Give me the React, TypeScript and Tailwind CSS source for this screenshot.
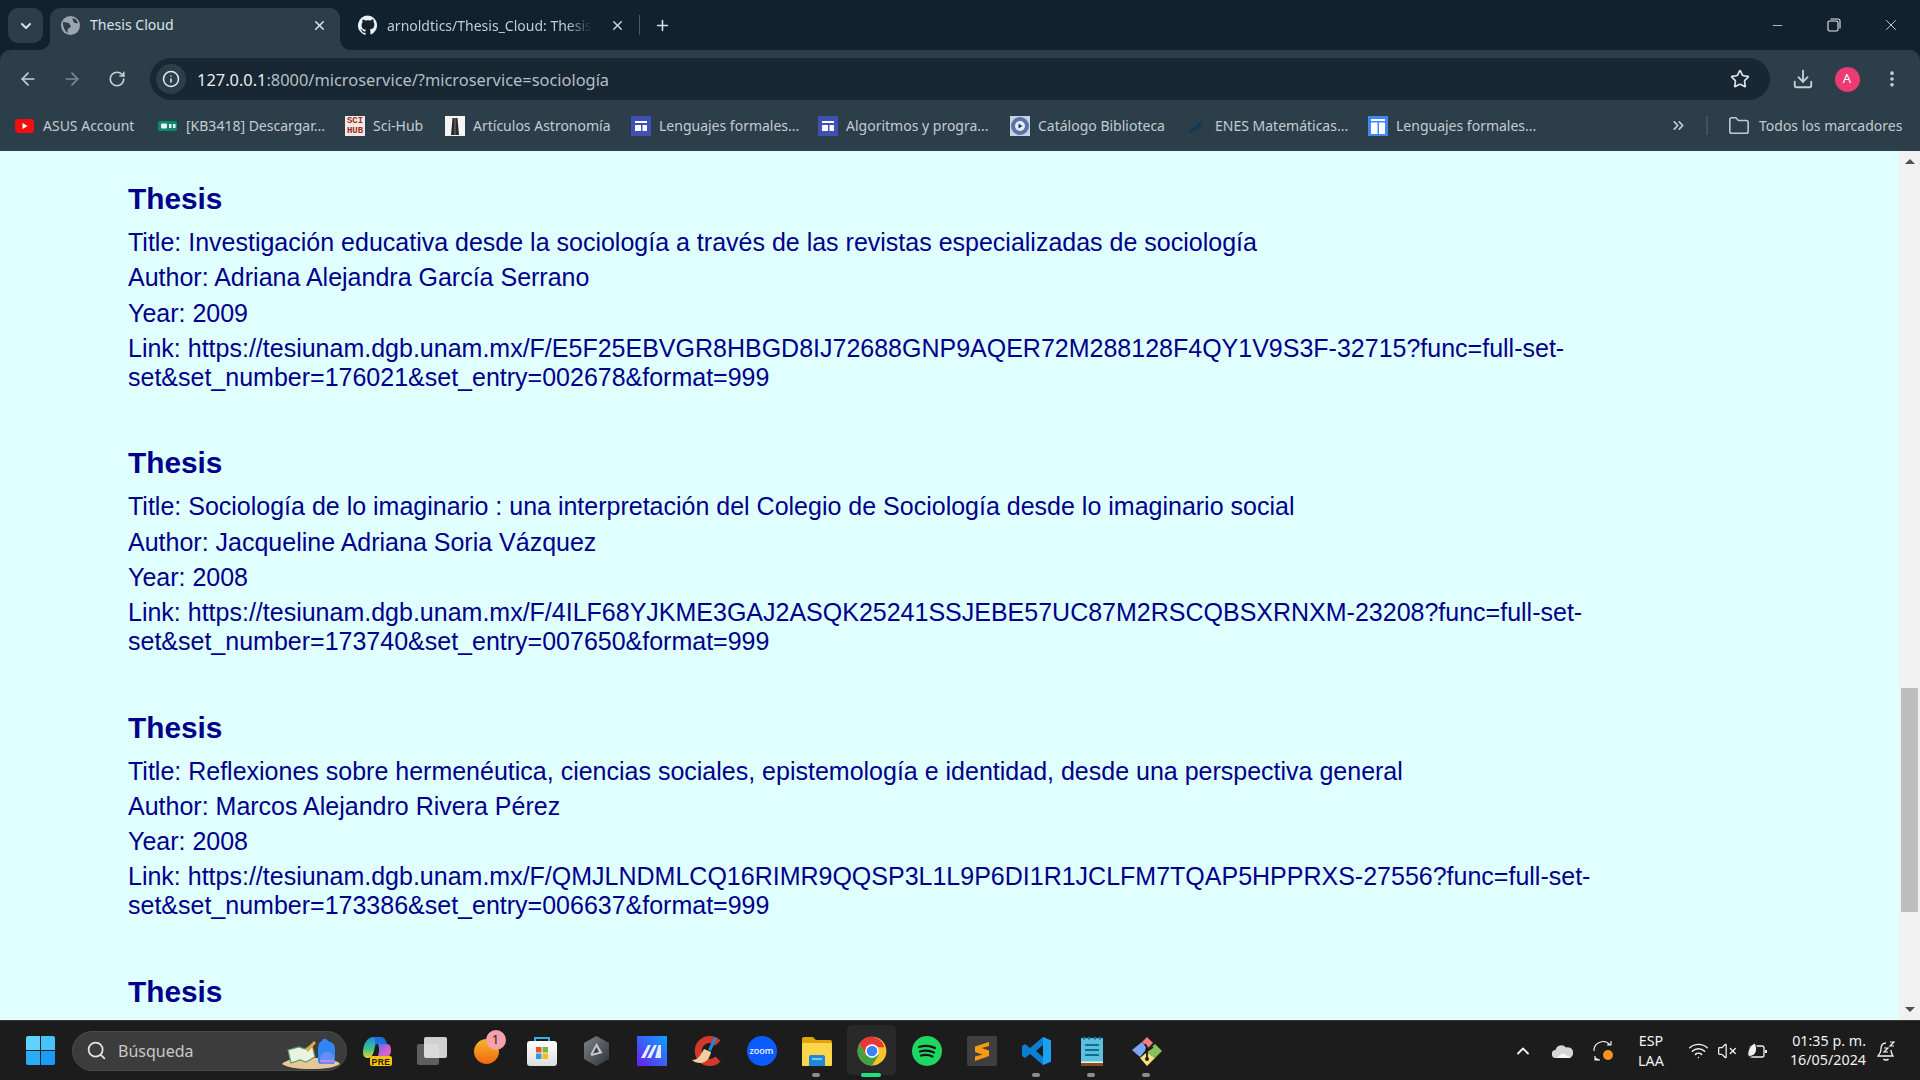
import { ArrowLeft, ArrowRight, RotateCw, Info, Star, Download, EllipsisVertical, ChevronsRight, Folder, X, Plus, ChevronDown, Minus, Search, ChevronUp, Wifi, VolumeX } from 'lucide-react'

const THESES = [
  {
    title: 'Investigación educativa desde la sociología a través de las revistas especializadas de sociología',
    author: 'Adriana Alejandra García Serrano',
    year: '2009',
    link: 'https://tesiunam.dgb.unam.mx/F/E5F25EBVGR8HBGD8IJ72688GNP9AQER72M288128F4QY1V9S3F-32715?func=full-set-set&set_number=176021&set_entry=002678&format=999',
  },
  {
    title: 'Sociología de lo imaginario : una interpretación del Colegio de Sociología desde lo imaginario social',
    author: 'Jacqueline Adriana Soria Vázquez',
    year: '2008',
    link: 'https://tesiunam.dgb.unam.mx/F/4ILF68YJKME3GAJ2ASQK25241SSJEBE57UC87M2RSCQBSXRNXM-23208?func=full-set-set&set_number=173740&set_entry=007650&format=999',
  },
  {
    title: 'Reflexiones sobre hermenéutica, ciencias sociales, epistemología e identidad, desde una perspectiva general',
    author: 'Marcos Alejandro Rivera Pérez',
    year: '2008',
    link: 'https://tesiunam.dgb.unam.mx/F/QMJLNDMLCQ16RIMR9QQSP3L1L9P6DI1R1JCLFM7TQAP5HPPRXS-27556?func=full-set-set&set_number=173386&set_entry=006637&format=999',
  },
]

function FormsIcon({ light }: { light?: boolean }) {
  return (
    <svg width="20" height="20" viewBox="0 0 20 20">
      <rect width="20" height="20" fill={light ? '#4285f4' : '#3f51b5'} />
      {light ? (
        <>
          <rect x="3" y="3" width="14" height="15" fill="#fff" />
          <rect x="3" y="5" width="14" height="1.5" fill="#4285f4" />
          <rect x="9.5" y="6" width="1.5" height="12" fill="#4285f4" />
        </>
      ) : (
        <>
          <rect x="4" y="5" width="12" height="2" fill="#fff" />
          <rect x="4" y="9" width="12" height="6" fill="#fff" />
          <rect x="10" y="9" width="1.5" height="6" fill="#3f51b5" />
        </>
      )}
    </svg>
  )
}

const BOOKMARKS = [
  {
    label: 'ASUS Account',
    w: 'w-[95px]',
    icon: (
      <svg width="20" height="20" viewBox="0 0 20 20">
        <rect x="0" y="3" width="19" height="14" rx="4" fill="#f40f0f" />
        <path d="M7.5 7l5 3-5 3z" fill="#fff" />
      </svg>
    ),
  },
  {
    label: '[KB3418] Descargar...',
    w: 'w-[139px]',
    icon: (
      <svg width="20" height="20" viewBox="0 0 20 20">
        <rect x="0" y="5" width="19" height="10" rx="2" fill="#0a8a6a" />
        <rect x="3" y="7.5" width="6" height="5" rx="1" fill="#e4f3ee" />
        <rect x="11" y="8" width="2.5" height="4" fill="#e4f3ee" />
        <rect x="15" y="8" width="2.5" height="4" fill="#e4f3ee" />
      </svg>
    ),
  },
  {
    label: 'Sci-Hub',
    w: 'w-[52px]',
    icon: (
      <div className="flex h-[20px] w-[20px] flex-col items-center justify-center bg-[#f3e9e4] font-['Liberation_Mono',monospace] text-[9px] font-bold leading-[10px] text-[#9c2b22]">
        <span>SCI</span>
        <span>HUB</span>
      </div>
    ),
  },
  {
    label: 'Artículos Astronomía',
    w: 'w-[138px]',
    icon: (
      <svg width="20" height="20" viewBox="0 0 20 20">
        <rect width="20" height="20" fill="#f4f4f4" />
        <path d="M6 19L7.5 2h5L14 19z" fill="#2b2b2b" />
        <path d="M10 2v17" stroke="#777" strokeWidth="1" />
      </svg>
    ),
  },
  { label: 'Lenguajes formales...', w: 'w-[139px]', icon: <FormsIcon /> },
  { label: 'Algoritmos y progra...', w: 'w-[144px]', icon: <FormsIcon /> },
  {
    label: 'Catálogo Biblioteca',
    w: 'w-[129px]',
    icon: (
      <svg width="20" height="20" viewBox="0 0 20 20">
        <rect width="20" height="20" fill="#c9d3e6" />
        <circle cx="10" cy="10" r="9" fill="#5a74a8" />
        <circle cx="10" cy="10" r="5" fill="#e7ecf5" />
        <path d="M8.5 7.5l4 2.5-4 2.5z" fill="#1d3a78" />
      </svg>
    ),
  },
  {
    label: 'ENES Matemáticas...',
    w: 'w-[133px]',
    icon: (
      <svg width="20" height="20" viewBox="0 0 20 20">
        <path d="M1 17c2-4 5-6 8-7 2-2 4-5 7-7-1 3-1 6-3 9-3 2-7 4-12 5z" fill="#0d3b52" />
      </svg>
    ),
  },
  { label: 'Lenguajes formales...', w: 'w-[138px]', icon: <FormsIcon light /> },
]

function CopilotIcon() {
  return (
    <svg width="30" height="30" viewBox="0 0 30 30">
      <defs>
        <linearGradient id="cl" x1="0" y1="0" x2="0" y2="1">
          <stop offset="0" stopColor="#1f8fe0" />
          <stop offset="0.55" stopColor="#3fc08a" />
          <stop offset="1" stopColor="#e8d43a" />
        </linearGradient>
        <linearGradient id="cr" x1="0" y1="0" x2="1" y2="1">
          <stop offset="0" stopColor="#3f7cf0" />
          <stop offset="0.5" stopColor="#c65fd8" />
          <stop offset="1" stopColor="#f06aa8" />
        </linearGradient>
      </defs>
      <path d="M1 17C1 8 5 1 12 1h7c-4 0-5 3-6 9-1 7-3 12-7 12-3 0-5-2-5-5z" fill="url(#cl)" />
      <path d="M12 1h7c3 0 5 3 6 7H16c-2 0-3 1-3 3 0-5 0-8-1-10z" fill="#1f6fe0" />
      <path d="M16 8h9c3 0 4 3 4 6 0 4-2 8-6 8h-8c2-3 3-9 1-14z" fill="url(#cr)" />
      <rect x="8" y="20" width="22" height="10" rx="2" fill="#f7c20b" />
      <text x="19" y="28.500" textAnchor="middle" fontSize="8.500" fontWeight="700" letterSpacing="0.5" fontFamily="Liberation Sans, sans-serif" fill="#1a1a1a">PRE</text>
    </svg>
  )
}

function TaskIcon({ children, dot, active }: { children: React.ReactNode; dot?: boolean; active?: boolean }) {
  return (
    <div className="relative flex h-[59px] w-[55px] items-center justify-center">
      {active && <div className="absolute left-[3px] top-[4px] h-[50px] w-[49px] rounded-[5px] bg-[#292929]" />}
      <div className="relative flex items-center justify-center">{children}</div>
      {dot && <div className="absolute bottom-[3px] left-[23px] h-[4px] w-[8px] rounded-full bg-[#8c8c8c]" />}
      {active && <div className="absolute bottom-[3px] left-[17px] h-[4px] w-[20px] rounded-full bg-[#1fe27f]" />}
    </div>
  )
}

export default function App() {
  return (
    <div className="flex h-[1080px] w-[1920px] flex-col overflow-hidden bg-[#10222f] font-['Noto_Sans',sans-serif]">
      {/* Tab strip */}
      <div className="flex h-[50px] items-end bg-[#10222f] pl-[8px]">
        <div className="mb-[7px] mr-[7px] flex h-[35px] w-[35px] items-center justify-center self-end rounded-[10px] bg-[#2d3e4b] text-[#d9e0e5]">
          <ChevronDown size={16} strokeWidth={3} />
        </div>
        <div className="relative flex h-[42px] w-[290px] items-center rounded-t-[10px] bg-[#2d3e4b] pb-[8px] pl-[11px] pr-[13px]">
          <div className="absolute bottom-0 left-[-10px] h-[10px] w-[10px] bg-[radial-gradient(circle_at_0_0,transparent_9.5px,#2d3e4b_10px)]" />
          <div className="absolute bottom-0 right-[-10px] h-[10px] w-[10px] bg-[radial-gradient(circle_at_100%_0,transparent_9.5px,#2d3e4b_10px)]" />
          <svg width="19" height="19" viewBox="0 0 20 20">
            <circle cx="10" cy="10" r="10" fill="#9aa5ad" />
            <path d="M2 6c2 0 3 1 5 1s2 2 3 3-1 3-2 3-1 3-1 5C4 16 2 12 2 6zM12 1c0 2 2 2 3 2l3 4c-1 1-3 1-4 0s-2-3-2-6z" fill="#2d3e4b" />
          </svg>
          <span className="ml-[10px] flex-1 text-[14.100px] text-[#dde3e7]">Thesis Cloud</span>
          <X size={15} strokeWidth={2.4} className="text-[#dde3e7]" />
        </div>
        <div className="flex h-[42px] items-center pb-[8px] pl-[18px]">
          <svg width="20" height="20" viewBox="0 0 24 24" fill="#eef1f3">
            <path d="M12 .5a12 12 0 0 0-3.800 23.400c.6.1.8-.3.8-.6v-2c-3.300.7-4-1.600-4-1.600-.6-1.400-1.400-1.800-1.400-1.800-1-.7.1-.7.1-.7 1.200.1 1.800 1.200 1.800 1.200 1 1.800 2.800 1.300 3.500 1 .1-.8.4-1.300.8-1.600-2.700-.3-5.500-1.300-5.500-5.900 0-1.300.5-2.400 1.200-3.200-.1-.3-.5-1.500.1-3.200 0 0 1-.3 3.300 1.200a11.500 11.500 0 0 1 6 0C17.300 4.700 18.300 5 18.300 5c.7 1.700.3 2.900.1 3.200.8.8 1.200 1.900 1.200 3.200 0 4.600-2.800 5.600-5.500 5.900.4.400.8 1.100.8 2.200v3.300c0 .3.2.7.8.6A12 12 0 0 0 12 .5z" />
          </svg>
          <span className="ml-[9px] w-[205px] overflow-hidden whitespace-nowrap text-[14px] text-[#c3ccd2] [mask-image:linear-gradient(to_right,black_88%,transparent)]">
            arnoldtics/Thesis_Cloud: Thesis Cloud
          </span>
          <X size={15} strokeWidth={2.4} className="ml-[18px] text-[#c9d1d7]" />
          <div className="ml-[14px] h-[20px] w-px bg-[#4a5a66]" />
          <Plus size={17} strokeWidth={2.2} className="ml-[14px] text-[#d9e0e5]" />
        </div>
        <div className="flex-1" />
        <div className="mb-[16px] flex items-center text-[#e8ecef]">
          <div className="flex w-[56px] justify-center">
            <Minus size={15} strokeWidth={1.2} />
          </div>
          <div className="flex w-[57px] justify-center">
            <svg width="14" height="14" viewBox="0 0 14 14" fill="none" stroke="currentColor" strokeWidth="1.100">
              <rect x="1" y="3" width="10" height="10" rx="1.500" />
              <path d="M3.500 1h8a2 2 0 0 1 1.500 1.500v8" />
            </svg>
          </div>
          <div className="flex w-[58px] justify-center">
            <X size={18} strokeWidth={1.100} />
          </div>
        </div>
      </div>

      {/* Toolbar */}
      <div className="flex h-[50px] items-start rounded-tl-[10px] rounded-tr-[10px] bg-[#2d3e4b] pt-[8px] text-[#c7d0d6]">
        <div className="flex h-[42px] w-[46px] items-center justify-center pl-[10px]">
          <ArrowLeft size={20} strokeWidth={2} />
        </div>
        <div className="flex h-[42px] w-[52px] items-center justify-center text-[#7c8a94]">
          <ArrowRight size={20} strokeWidth={2} />
        </div>
        <div className="flex h-[42px] w-[38px] items-center justify-center">
          <RotateCw size={18} strokeWidth={2.200} />
        </div>
        <div className="ml-[14px] flex h-[42px] w-[1620px] items-center rounded-full bg-[#172733] pl-[6px] pr-[20px]">
          <div className="flex h-[30px] w-[30px] items-center justify-center rounded-full bg-[#2d3e4b] text-[#e6eaed]">
            <Info size={18} strokeWidth={2} />
          </div>
          <span className="ml-[11px] flex-1 pt-[2px] text-[16.400px] text-[#b4bfc6]">
            <span className="text-[#e8ecef]">127.0.0.1</span>:8000/microservice/?microservice=sociología
          </span>
          <Star size={20} strokeWidth={2} className="text-[#dfe4e8]" />
        </div>
        <div className="ml-[21px] flex h-[42px] w-[24px] items-center justify-center">
          <Download size={22} strokeWidth={2} />
        </div>
        <div className="ml-[19px] flex h-[42px] w-[26px] items-center justify-center">
          <div className="flex h-[25px] w-[25px] items-center justify-center rounded-full bg-[#ec3a73] text-[13px] text-white">A</div>
        </div>
        <div className="ml-[20px] flex h-[42px] w-[24px] items-center justify-center">
          <EllipsisVertical size={20} strokeWidth={2.400} />
        </div>
      </div>

      {/* Bookmarks bar */}
      <div className="flex h-[51px] items-center bg-[#2d3e4b] pl-[15px] pr-[18px] text-[14px] text-[#c2ccd3]">
        <div className="flex items-center gap-[20px]">
          {BOOKMARKS.map((b, i) => (
            <div key={i} className="flex items-center gap-[8px]">
              <div className="flex h-[20px] w-[20px] items-center justify-center">{b.icon}</div>
              <span className={`${b.w} whitespace-nowrap`}>{b.label}</span>
            </div>
          ))}
        </div>
        <div className="flex-1" />
        <ChevronsRight size={17} strokeWidth={2.400} className="mr-[19px]" />
        <div className="mr-[20px] h-[19px] w-[2px] bg-[#42525e]" />
        <Folder size={22} strokeWidth={1.700} className="mr-[9px]" />
        <span className="w-[143px] whitespace-nowrap">Todos los marcadores</span>
      </div>

      {/* Page */}
      <div className="flex h-[869px] bg-[#e0ffff]">
        <div className="h-full flex-1 overflow-hidden pl-[128px] pr-[123px] pt-[31px] font-['Liberation_Sans',Arial,sans-serif] text-[#00008b]">
          {[...THESES, null].map((t, i) => (
            <div key={i} className="mb-[54.400px]">
              <h2 className="mb-[13px] text-[29.800px] font-bold leading-[33px]">Thesis</h2>
              {t && (
                <div className="flex flex-col gap-[6.300px] text-[25px] leading-[29px]">
                  <p>Title: {t.title}</p>
                  <p>Author: {t.author}</p>
                  <p>Year: {t.year}</p>
                  <p>Link: {t.link}</p>
                </div>
              )}
            </div>
          ))}
        </div>
        <div className="flex h-full w-[21px] flex-col bg-[#f1f1f1] pl-[2px] pr-[2px]">
          <div className="flex h-[21px] items-center justify-center">
            <div className="h-0 w-0 border-x-[5px] border-b-[5px] border-x-transparent border-b-[#505050]" />
          </div>
          <div className="mt-[516px] h-[224px] bg-[#bebebe]" />
          <div className="flex-1" />
          <div className="flex h-[21px] items-center justify-center">
            <div className="h-0 w-0 border-x-[5px] border-t-[5px] border-x-transparent border-t-[#505050]" />
          </div>
        </div>
      </div>

      {/* Taskbar */}
      <div className="flex h-[60px] items-center border-t border-[#333] bg-[#1c1c1c] text-white">
        <div className="ml-[26px] grid h-[29px] w-[29px] grid-cols-2 gap-[1px]">
          <div className="rounded-tl-[2px] bg-[#5fd3fb]" />
          <div className="rounded-tr-[2px] bg-[#45c4fa]" />
          <div className="rounded-bl-[2px] bg-[#28aef7]" />
          <div className="rounded-br-[2px] bg-[#1a9cf5]" />
        </div>
        <div className="relative ml-[17px] flex h-[40px] w-[275px] items-center rounded-full border border-[#4a4a4a] bg-[#3c3c3c] pl-[13px]">
          <Search size={21} strokeWidth={2} className="text-[#e4e4e4]" />
          <span className="ml-[11px] text-[16px] text-[#c9c9c9]">Búsqueda</span>
          <svg className="absolute bottom-[1px] right-[4px]" width="60" height="36" viewBox="0 0 60 36">
            <path d="M0 31c4-4 12-6 29-6s26 2 29 6c-4 3-14 5-29 5S4 34 0 31z" fill="#e6c79a" />
            <path d="M6 17l11-3 6 2 7-5 3 13-9 5-6-2-9 3z" fill="#e9f3e4" stroke="#5f9b63" strokeWidth="1.200" />
            <path d="M24 17l8-9 2 2-8 9z" fill="#f2a13b" />
            <path d="M36 16c0-6 3-8 4-8 0-3 5-3 6 0 4 1 7 3 7 8v12c0 2-1 3-3 3H39c-2 0-3-1-3-3z" fill="#2f86f2" />
            <path d="M38 26c0-5 3-7 7-7s7 2 7 7v2c0 2-1 3-3 3H41c-2 0-3-1-3-3z" fill="#6a8cf5" />
            <rect x="38" y="27" width="14" height="2" fill="#b58cf0" />
          </svg>
        </div>
        <div className="ml-[2px] flex">
          <TaskIcon>
            <CopilotIcon />
          </TaskIcon>
          <TaskIcon>
            <div className="relative h-[28px] w-[30px]">
              <div className="absolute bottom-0 left-0 h-[21px] w-[22px] rounded-[2px] bg-[#5e5e5e]" />
              <div className="absolute right-0 top-0 h-[21px] w-[23px] rounded-[2px] bg-[#f0f0f0]/85" />
            </div>
          </TaskIcon>
          <TaskIcon>
            <div className="relative h-[30px] w-[30px]">
              <div className="absolute left-[2px] top-[3px] h-[25px] w-[25px] rounded-full bg-gradient-to-b from-[#f2b62c] to-[#f0640f]" />
              <div className="absolute left-[14px] top-[-6px] flex h-[20px] w-[20px] items-center justify-center rounded-full bg-[#f6a2a8] text-[13px] text-[#222]">1</div>
            </div>
          </TaskIcon>
          <TaskIcon>
            <svg width="30" height="30" viewBox="0 0 30 30">
              <defs>
                <linearGradient id="st" x1="0" y1="0" x2="0" y2="1">
                  <stop offset="0" stopColor="#ffffff" />
                  <stop offset="1" stopColor="#dcdcdc" />
                </linearGradient>
              </defs>
              <path d="M8 6V2h14v4" fill="none" stroke="#2ab5e8" strokeWidth="2" />
              <rect y="5" width="30" height="25" rx="3" fill="url(#st)" />
              <rect x="9" y="11" width="5.500" height="5.500" fill="#e8532b" />
              <rect x="15.500" y="11" width="5.500" height="5.500" fill="#7cb342" />
              <rect x="9" y="17.500" width="5.500" height="5.500" fill="#2a9de8" />
              <rect x="15.500" y="17.500" width="5.500" height="5.500" fill="#f9bc15" />
            </svg>
          </TaskIcon>
          <TaskIcon>
            <svg width="27" height="30" viewBox="0 0 27 30">
              <defs>
                <linearGradient id="hx" x1="0" y1="0" x2="1" y2="1">
                  <stop offset="0" stopColor="#7d848c" />
                  <stop offset="1" stopColor="#2e3236" />
                </linearGradient>
              </defs>
              <path d="M13.500 0L26 7v16l-12.500 7L1 23V7z" fill="url(#hx)" />
              <path d="M13.500 7l6 10-11 3-1-2z" fill="#c4c9ce" />
              <path d="M13.500 11l2.500 5-6 1.500z" fill="#3a3f44" />
            </svg>
          </TaskIcon>
          <TaskIcon>
            <svg width="30" height="30" viewBox="0 0 30 30">
              <defs>
                <linearGradient id="mg" x1="0" y1="1" x2="1" y2="0">
                  <stop offset="0" stopColor="#6a1cf2" />
                  <stop offset="1" stopColor="#0aa5ff" />
                </linearGradient>
              </defs>
              <rect width="30" height="30" fill="url(#mg)" />
              <path d="M4 22L11 9h3L8 22zM10 22l7-13h3L14 22zM18 22l3.500-13H24v13z" fill="#e6ebff" />
            </svg>
          </TaskIcon>
          <TaskIcon>
            <svg width="32" height="30" viewBox="0 0 32 30">
              <path d="M27 7A11.500 11.500 0 1 0 27 23" fill="none" stroke="#d4382c" strokeWidth="7" />
              <path d="M23 1l3 1-6 13-3-1z" fill="#1e88d8" />
              <path d="M13 13l7 3c-1 5-4 11-11 11-3 0-6-1-8-3 5 0 8-3 12-11z" fill="#f0cfa0" />
            </svg>
          </TaskIcon>
          <TaskIcon>
            <div className="flex h-[30px] w-[30px] items-center justify-center rounded-full bg-[#0b5cff] text-[9px] font-medium text-white">zoom</div>
          </TaskIcon>
          <TaskIcon dot>
            <svg width="30" height="30" viewBox="0 0 30 30">
              <path d="M0 3a2 2 0 0 1 2-2h9l3 3h14a2 2 0 0 1 2 2v4H0z" fill="#e0a30a" />
              <rect y="7" width="30" height="23" rx="1" fill="#fbd54a" />
              <path d="M7 21a2 2 0 0 1 2-2h12a2 2 0 0 1 2 2v9H7z" fill="#1e88d8" />
              <rect x="10" y="22" width="10" height="2" fill="#7cc4f5" />
            </svg>
          </TaskIcon>
          <TaskIcon active>
            <svg width="30" height="30" viewBox="0 0 48 48">
              <circle cx="24" cy="24" r="23" fill="#fbc02d" />
              <path d="M24 1a23 23 0 0 0-20 11.500L14 30l2-12h28A23 23 0 0 0 24 1z" fill="#e53935" />
              <path d="M4 12.500A23 23 0 0 0 24 47l11-17-21 0z" fill="#43a047" />
              <circle cx="24" cy="24" r="11" fill="#fff" />
              <circle cx="24" cy="24" r="8.500" fill="#3b82f6" />
            </svg>
          </TaskIcon>
          <TaskIcon>
            <svg width="30" height="30" viewBox="0 0 30 30">
              <circle cx="15" cy="15" r="15" fill="#1ed760" />
              <path d="M7 11c6-2 11-1.500 16 1M8 15.500c5-1.500 10-1 14 1M9 19.500c4-1 8-.8 11.500 1" fill="none" stroke="#151515" strokeWidth="2.300" strokeLinecap="round" />
            </svg>
          </TaskIcon>
          <TaskIcon>
            <svg width="30" height="30" viewBox="0 0 30 30">
              <rect width="30" height="30" rx="2" fill="#3f3f3f" />
              <path d="M22 6L8 10.500V16l7.500 2.500L8 20.500V25l14-5v-5.500L14.500 12 22 10z" fill="#f99b11" />
            </svg>
          </TaskIcon>
          <TaskIcon dot>
            <svg width="30" height="30" viewBox="0 0 30 30">
              <path fillRule="evenodd" d="M21 1l8 3.500v21L21 29 8 18l-5 4-3-2V10l3-2 5 4zM21 9l-7 6 7 6z" fill="#0a7fcf" />
              <path d="M21 1l8 3.500v21L21 29z" fill="#1ba1f1" />
            </svg>
          </TaskIcon>
          <TaskIcon dot>
            <svg width="22" height="30" viewBox="0 0 22 30">
              <rect y="2" width="22" height="28" fill="#5bc0de" />
              <rect y="27" width="22" height="3" fill="#8a4a1a" />
              <rect y="25.500" width="22" height="1.500" fill="#e8f4f8" />
              <circle cx="3" cy="2" r="1.500" fill="#0f6f93" />
              <circle cx="8" cy="2" r="1.500" fill="#0f6f93" />
              <circle cx="14" cy="2" r="1.500" fill="#0f6f93" />
              <circle cx="19" cy="2" r="1.500" fill="#0f6f93" />
              <rect x="4" y="8" width="14" height="2" fill="#0f6f93" />
              <rect x="4" y="13" width="14" height="2" fill="#0f6f93" />
              <rect x="4" y="18" width="14" height="2" fill="#0f6f93" />
            </svg>
          </TaskIcon>
          <TaskIcon dot>
            <svg width="30" height="30" viewBox="0 0 30 30">
              <path d="M10 6l5-5 6 6-5 5z" fill="#f47c7c" />
              <path d="M10 6l4 5-1 4-5 6-8-7z" fill="#7aa7f5" />
              <path d="M16 14l7-6 7 7-7 7-7-5z" fill="#86c25a" />
              <path d="M14 17l2 0 7 5-8 8-7-8z" fill="#f9e27d" />
              <path d="M13 8l3 5M15 13v10M15 15l6-4" stroke="#1a1a1a" strokeWidth="1.800" fill="none" />
              <circle cx="15" cy="23" r="2" fill="#1a1a1a" />
            </svg>
          </TaskIcon>
        </div>
        <div className="flex-1" />
        <div className="flex items-center text-[#f2f2f2]">
          <ChevronUp size={20} strokeWidth={2.200} />
          <svg className="ml-[19px]" width="21" height="14" viewBox="0 0 21 14">
            <path d="M4 14a4 4 0 0 1-.5-8A6 6 0 0 1 14 3.500 5 5 0 0 1 17.500 14z" fill="#d5d5d5" />
            <path d="M4 14l7-5 8 5z" fill="#f5f5f5" />
          </svg>
          <svg className="ml-[19px]" width="22" height="22" viewBox="0 0 22 22" fill="none" stroke="#f2f2f2" strokeWidth="1.200">
            <path d="M2 11a9 9 0 0 1 16-6M15 5h4V1M8 20H3v-4M3 18a9 9 0 0 0 5 2" />
            <circle cx="16" cy="15" r="5" fill="#f7931a" stroke="none" />
          </svg>
          <div className="ml-[17px] flex w-[40px] flex-col items-center text-[14.300px] leading-[20px]">
            <span>ESP</span>
            <span>LAA</span>
          </div>
          <Wifi size={21} strokeWidth={1.700} className="ml-[17px]" />
          <VolumeX size={20} strokeWidth={1.500} className="ml-[8px]" />
          <svg className="ml-[10px]" width="21" height="21" viewBox="0 0 21 21" fill="none" stroke="#f2f2f2" strokeWidth="1.300">
            <rect x="3" y="6" width="14" height="11" rx="2" />
            <path d="M19 10v3" strokeWidth="2" />
            <path d="M1 16c-1-5 2-11 7-13 2 4 2 8 0 11-2 2-5 3-7 2z" fill="#f2f2f2" stroke="#1c1c1c" strokeWidth="1" />
          </svg>
          <div className="ml-[18px] flex w-[80px] flex-col items-end whitespace-nowrap pb-[1px] text-[14.300px] leading-[19px]">
            <span>01:35 p. m.</span>
            <span>16/05/2024</span>
          </div>
          <svg className="ml-[11px] mr-[24px]" width="19" height="21" viewBox="0 0 19 21" fill="none" stroke="#f2f2f2" strokeWidth="1.300">
            <path d="M9 3C5 3 4 6 4 9c0 4-2 5-3 7h15c-1-2-2-3-2-6" />
            <path d="M6.500 19c1 1.300 4 1.300 5 0" />
            <path d="M7 8h4l-4 4h4M13 2h4l-4 4h4" strokeWidth="1.200" />
          </svg>
        </div>
      </div>
    </div>
  )
}
